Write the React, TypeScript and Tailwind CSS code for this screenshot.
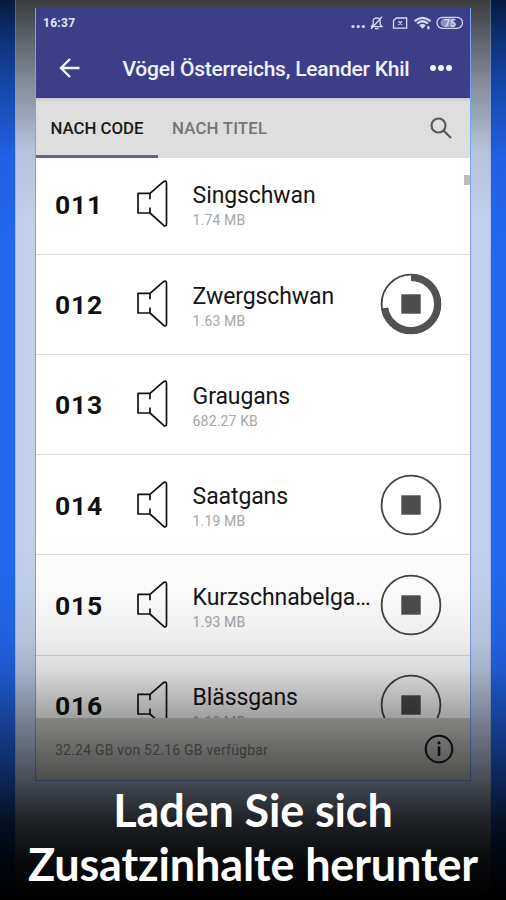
import React from "react";

type Item = { code: string; title: string; size: string; state?: "stop" | "progress" };

const items: Item[] = [
  { code: "011", title: "Singschwan", size: "1.74 MB" },
  { code: "012", title: "Zwergschwan", size: "1.63 MB", state: "progress" },
  { code: "013", title: "Graugans", size: "682.27 KB" },
  { code: "014", title: "Saatgans", size: "1.19 MB", state: "stop" },
  { code: "015", title: "Kurzschnabelga…", size: "1.93 MB", state: "stop" },
  { code: "016", title: "Blässgans", size: "1.18 MB", state: "stop" },
];

function Speaker() {
  return (
    <svg className="ml-[31px] h-[48px] w-[34px] shrink-0" viewBox="0 0 34 48" fill="none" stroke="#111" strokeWidth="1.7" strokeLinejoin="round">
      <path d="M14 19.2V13.4H2V33H14V27.5M14 13.4L27.5 1.6Q30.5 .4 30.5 3V44Q30.5 46.4 28 45.6L14 33" />
    </svg>
  );
}

function Stop({ progress }: { progress: boolean }) {
  return (
    <svg className="h-[62px] w-[62px]" viewBox="0 0 62 62" fill="none">
      <circle cx="31" cy="31" r="29.4" stroke="#444" strokeWidth="1.8" />
      {progress && <path d="M31 4.5A26.5 26.5 0 1 1 4.8 35" stroke="#525252" strokeWidth="7" />}
      <path d="M21.3 21.3h19.4v19.4H21.3z" fill="#4d4d4d" />
    </svg>
  );
}

function Row({ item }: { item: Item }) {
  return (
    <div className="flex h-[100.3px] shrink-0 items-center border-b border-[#dcdcde] pl-[19px]">
      <div className="w-[50px] shrink-0 pt-[2px] text-[26.5px] leading-[30px] font-bold tracking-[0.8px] text-[#111]">{item.code}</div>
      <Speaker />
      <div className="mt-[4px] ml-[22.6px] w-[187.4px] shrink-0">
        <div className="text-[23px] leading-[28px] tracking-[-0.1px] whitespace-nowrap text-[#161616]">{item.title}</div>
        <div className="mt-px text-[14px] leading-[18px] tracking-[0.15px] text-[#a6a6a6]">{item.size}</div>
      </div>
      {item.state && <Stop progress={item.state === "progress"} />}
    </div>
  );
}

function StatusBar() {
  return (
    <div className="flex h-[30px] items-center pr-[6px] pl-[7px] text-[#d8daf3]">
      <span className="text-[12px] leading-[14px] font-bold tracking-[0.3px] text-[#e4e6fa]">16:37</span>
      <svg className="ml-auto h-[16px] w-[114px]" viewBox="0 0 114 16" fill="none" stroke="currentColor" strokeWidth="1.3">
        <g fill="currentColor" stroke="none">
          <circle cx="3" cy="11.5" r="1.6" />
          <circle cx="8.2" cy="11.5" r="1.6" />
          <circle cx="13.4" cy="11.5" r="1.6" />
        </g>
        <path d="M21 11.7H32L30.2 9.5V6.2Q30 2.8 26.6 2.8Q23.3 3 23.2 6.2V9.5L21 11.7M25 13.7H28.5M21 14L32 1.8" />
        <path d="M43.5 5.5L46.5 3H56.7V13.2H43.5ZM48.5 6.3L52 9.8M52 6.3L48.5 9.8" />
        <path d="M64.6 6.1Q72.5-.4 80.5 6.1M67.1 8.5Q72.5 4 78 8.5" strokeWidth="2.2" />
        <path d="M69.2 10.2Q72.5 8 75.8 10.2L72.5 13.8ZM77.2 11.2h2.3v3h-2.3z" fill="currentColor" stroke="none" />
        <rect x="87" y="2.3" width="25.5" height="11" rx="5.5" />
        <path d="M94 3.6H104V12H94Q91 11.6 90.5 7.8Q91 4 94 3.6" fill="#8d90c2" stroke="none" />
        <text x="94" y="11.6" fontSize="10.5" fontWeight="700" fontFamily="Roboto, sans-serif" fill="currentColor" stroke="none">75</text>
      </svg>
    </div>
  );
}

export default function App() {
  return (
    <div className="relative flex h-[900px] w-[506px] justify-center overflow-hidden bg-[linear-gradient(to_bottom,#061a3d_0px,#0d3278_40px,#174bb2_95px,#2062e5_160px,#2368ef_260px,#2368ef_900px)] font-[Roboto,sans-serif]">
      <div className="h-[900px] w-[476px] rounded-b-[20px] border-x border-[#7895e7]/40 bg-[linear-gradient(to_bottom,#3b3b3b_0px,#555b62_30px,#858e9a_85px,#b7c1da_150px,#c2d0ec_220px,#c2d0ec_900px)] px-[19px] pt-[8px]">
        <main className="flex h-[773px] w-[436px] flex-col overflow-hidden border border-t-0 border-[#79a2f2] bg-white">
          <header className="h-[90px] shrink-0 border-b border-[#34387c] bg-[#3c3f87]">
            <StatusBar />
            <div className="flex h-[60px] items-center pr-[17px] pl-[23px] text-[#f1f2ff]">
              <svg className="h-[22px] w-[22px]" viewBox="0 0 22 22" fill="none" stroke="currentColor" strokeWidth="2.4">
                <path d="M20.5 11H2M11 2L2 11L11 20" />
              </svg>
              <h1 className="mt-px ml-[41.5px] text-[21px] leading-[26px] font-medium tracking-[-0.22px] whitespace-nowrap">Vögel Österreichs, Leander Khil</h1>
              <svg className="ml-auto h-[8px] w-[24px] shrink-0" viewBox="0 0 24 8" fill="currentColor">
                <circle cx="4" cy="4" r="3" /><circle cx="12" cy="4" r="3" /><circle cx="20" cy="4" r="3" />
              </svg>
            </div>
          </header>
          <nav className="flex h-[60px] shrink-0 items-stretch bg-[linear-gradient(to_bottom,#c9c9cb_0px,#dcdcdc_4px,#dedede_8px)] text-[16.8px] font-medium">
            <div className="flex w-[122px] items-center justify-center border-b-[3px] border-[#655fa0] pt-[4px] text-[#1b1b1b]">NACH CODE</div>
            <div className="flex items-center pt-px pl-[14px] tracking-[0.2px] text-[#747474]">NACH TITEL</div>
            <svg className="mt-[18px] mr-[17.5px] ml-auto h-[24px] w-[24px]" viewBox="0 0 24 24" fill="none" stroke="#595959" strokeWidth="2.2">
              <circle cx="9.5" cy="9.5" r="7" /><path d="M14.6 14.6L22 22" />
            </svg>
          </nav>
          <section className="relative h-[560px] shrink-0 overflow-hidden">
            <div className="-mt-[3.8px] flex flex-col">
              {items.map((item) => <Row key={item.code} item={item} />)}
            </div>
            <div className="absolute top-[17px] right-0 h-[10px] w-[6px] bg-[#bdbdbd]" />
          </section>
          <footer className="flex min-h-0 flex-1 items-center justify-between bg-[#d3d3d0] pr-[16px] pl-[19px]">
            <span className="mt-[2px] text-[14px] leading-[18px] tracking-[0.22px] text-[#777]">32.24 GB von 52.16 GB verfügbar</span>
            <svg className="h-[30px] w-[30px]" viewBox="0 0 30 30" fill="none" stroke="#171717" strokeWidth="2">
              <circle cx="15" cy="15" r="13.3" /><path d="M15 12.5V22" strokeWidth="2.6" /><circle cx="15" cy="8.8" r="1.6" fill="#171717" stroke="none" />
            </svg>
          </footer>
        </main>
      </div>
      <div className="absolute inset-x-0 bottom-0 flex h-[370px] flex-col justify-end bg-[linear-gradient(to_bottom,transparent_0px,rgba(0,0,0,.02)_60px,rgba(0,0,0,.07)_110px,rgba(0,0,0,.15)_140px,rgba(0,0,0,.37)_187px,rgba(0,0,0,.64)_250px,rgba(0,0,0,.84)_290px,rgba(0,0,0,.95)_330px,#000_370px)] pb-[9px]">
        <p className="text-center font-[Lato,sans-serif] text-[45px] leading-[54px] font-bold tracking-[-0.15px] whitespace-nowrap text-white">Laden Sie sich<br />Zusatzinhalte herunter</p>
      </div>
    </div>
  );
}
